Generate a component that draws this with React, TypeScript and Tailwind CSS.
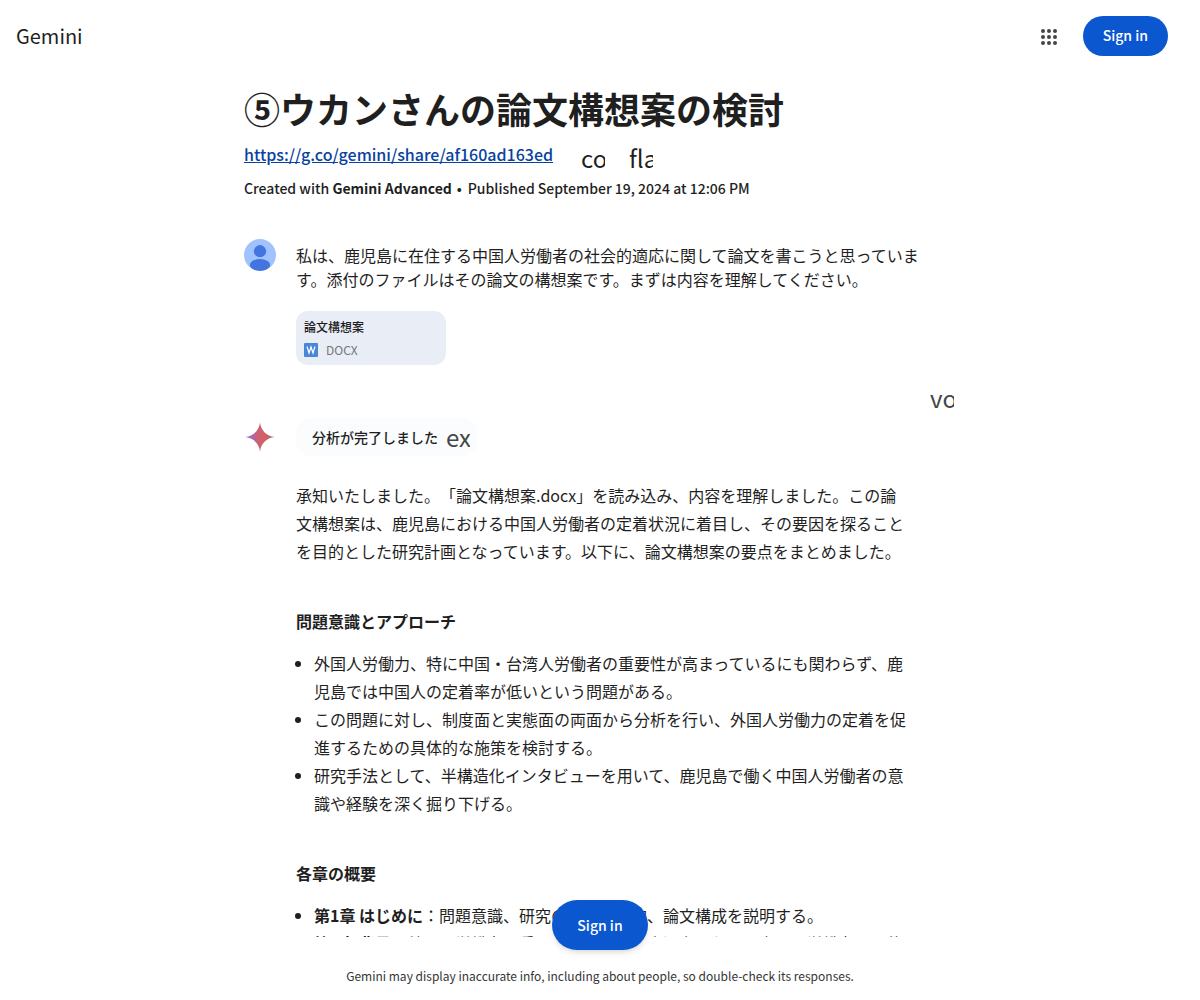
import React from "react";

interface Chapter {
  title: string;
  body: string;
}

const approach: string[] = [
  "外国人労働力、特に中国・台湾人労働者の重要性が高まっているにも関わらず、鹿児島では中国人の定着率が低いという問題がある。",
  "この問題に対し、制度面と実態面の両面から分析を行い、外国人労働力の定着を促進するための具体的な施策を検討する。",
  "研究手法として、半構造化インタビューを用いて、鹿児島で働く中国人労働者の意識や経験を深く掘り下げる。",
];

const chapters: Chapter[] = [
  { title: "第1章 はじめに", body: "：問題意識、研究の意義と目的、論文構成を説明する。" },
  { title: "第2章 背景", body: "：外国人労働者の受け入れ制度と、鹿児島における中国人労働者の現状を整理する。" },
];

// Fixed box that clips the ligature name of an icon
const IconText = ({ name }: { name: string }) => (
  <span className="block size-6 shrink-0 overflow-hidden whitespace-nowrap text-left text-2xl leading-6">
    {name}
  </span>
);

const AppsIcon = () => (
  <svg viewBox="0 0 24 24" className="size-6" fill="#444746" aria-hidden="true">
    {[6, 12, 18].map((y) =>
      [6, 12, 18].map((x) => <circle key={`${x}-${y}`} cx={x} cy={y} r="2" />)
    )}
  </svg>
);

const Avatar = () => (
  <svg viewBox="0 0 32 32" className="size-8 shrink-0" aria-hidden="true">
    <defs>
      <clipPath id="avatar">
        <circle cx="16" cy="16" r="16" />
      </clipPath>
    </defs>
    <g clipPath="url(#avatar)">
      <rect width="32" height="32" fill="#a0c3ff" />
      <circle cx="16" cy="12.2" r="6.1" fill="#4374e0" />
      <ellipse cx="16" cy="26" rx="10.2" ry="6" fill="#4374e0" />
    </g>
  </svg>
);

const Sparkle = () => (
  <svg viewBox="0 0 32 32" className="size-8 shrink-0" aria-hidden="true">
    <defs>
      <linearGradient id="sparkle" x1="2" y1="16" x2="30" y2="16" gradientUnits="userSpaceOnUse">
        <stop offset="0" stopColor="#9168c0" />
        <stop offset="0.2" stopColor="#a866b4" />
        <stop offset="0.45" stopColor="#cf6071" />
        <stop offset="0.7" stopColor="#d56062" />
        <stop offset="1" stopColor="#a06a72" />
      </linearGradient>
    </defs>
    <path
      d="M16 1.500C17 9.500 22.500 15 30.500 16C22.500 17 17 22.500 16 30.500C15 22.500 9.500 17 1.500 16C9.500 15 15 9.500 16 1.500Z"
      fill="url(#sparkle)"
    />
  </svg>
);

const WordIcon = () => (
  <svg viewBox="0 0 14 14" className="size-3.5" aria-hidden="true">
    <rect width="14" height="14" rx="1" fill="#4a86d8" />
    <path d="M3 3.500L5 10L7 4L9 10L11 3.500" fill="none" stroke="#fff" strokeWidth="1.200" />
  </svg>
);

export const App: React.FC = () => {
  return (
    <div className="flex h-screen flex-col bg-white font-['Noto_Sans_CJK_JP',sans-serif] text-[#1f1f1f] [text-spacing-trim:space-all]">
      <header className="flex h-18 shrink-0 items-center justify-between pl-4 pr-8">
        <a href="#gemini" className="text-xl leading-7">
          Gemini
        </a>
        <div className="flex items-center gap-[22px]">
          <button type="button" aria-label="Google apps" className="pt-0.5">
            <AppsIcon />
          </button>
          <button
            type="button"
            className="h-10 rounded-full bg-[#0b57d0] px-5 pb-0.5 text-sm font-medium text-white"
          >
            Sign in
          </button>
        </div>
      </header>

      <main className="min-h-0 flex-1 overflow-y-auto [scrollbar-width:none]">
        <div className="mx-auto max-w-[712px] pt-3.5">
          <h1 className="text-4xl leading-11 font-bold">⑤ウカンさんの論文構想案の検討</h1>
          <div className="mt-2 flex items-start">
            <a
              href="#share"
              className="text-base leading-8 font-medium text-[#0842a0] underline"
            >
              https://g.co/gemini/share/af160ad163ed
            </a>
            <div className="ml-7 flex gap-6 pt-2">
              <button type="button" aria-label="Copy link">
                <IconText name="content_copy" />
              </button>
              <button type="button" aria-label="Report">
                <IconText name="flag" />
              </button>
            </div>
          </div>
          <p className="mt-1.5 text-sm leading-6 font-medium">
            Created with <b>Gemini Advanced</b>
            <span className="mr-1.5 ml-[5px]">•</span>
            Published September 19, 2024 at 12:06 PM
          </p>

          <section className="mt-[39px] flex gap-5">
            <Avatar />
            <div className="pt-1">
              <p className="max-w-[628px] text-base leading-6">
                私は、鹿児島に在住する中国人労働者の社会的適応に関して論文を書こうと思っています。添付のファイルはその論文の構想案です。まずは内容を理解してください。
              </p>
              <div className="mt-5 w-[150px] rounded-xl bg-[#e9eef6] p-2">
                <p className="text-xs leading-4 font-medium">論文構想案</p>
                <div className="mt-2 flex items-center gap-2 text-xs leading-3.5 text-[#747775]">
                  <WordIcon />
                  DOCX
                </div>
              </div>
            </div>
          </section>

          <section>
            <div className="mt-[21px] flex justify-end pr-0.5 text-[#444746]">
              <button type="button" aria-label="Listen">
                <IconText name="volume_up" />
              </button>
            </div>
            <div className="mt-2 flex gap-5">
              <div className="pt-[3px]">
                <Sparkle />
              </div>
              <div className="max-w-[612px]">
                <button
                  type="button"
                  className="flex h-[38px] items-center gap-2 rounded-2xl bg-[#fafcfe] pl-4 pr-2 text-sm font-medium"
                >
                  分析が完了しました
                  <span className="font-normal text-[#444746]">
                    <IconText name="expand_more" />
                  </span>
                </button>
                <p className="mt-[25px] leading-7">
                  承知いたしました。「論文構想案.docx」を読み込み、内容を理解しました。この論文構想案は、鹿児島における中国人労働者の定着状況に着目し、その要因を探ることを目的とした研究計画となっています。以下に、論文構想案の要点をまとめました。
                </p>

                <h2 className="mt-[42px] leading-7 font-bold">問題意識とアプローチ</h2>
                <ul className="mt-3.5 list-disc pl-[18px] leading-7">
                  {approach.map((item) => (
                    <li key={item}>{item}</li>
                  ))}
                </ul>

                <h2 className="mt-[42px] leading-7 font-bold">各章の概要</h2>
                <ul className="mt-3.5 list-disc pl-[18px] leading-7">
                  {chapters.map((chapter) => (
                    <li key={chapter.title}>
                      <b>{chapter.title}</b>
                      {chapter.body}
                    </li>
                  ))}
                </ul>
              </div>
            </div>
          </section>
        </div>
      </main>

      <footer className="relative h-[63px] shrink-0 px-4 pt-[29px] text-center text-xs leading-5 text-[#343635]">
        {/* Floats over the end of the conversation */}
        <button
          type="button"
          className="absolute bottom-[50px] left-1/2 h-[50px] w-24 -translate-x-1/2 rounded-full bg-[#0b57d0] text-sm font-medium text-white shadow-md"
        >
          Sign in
        </button>
        <p>
          Gemini may display inaccurate info, including about people, so double-check its responses.
        </p>
      </footer>
    </div>
  );
};

export default App;
